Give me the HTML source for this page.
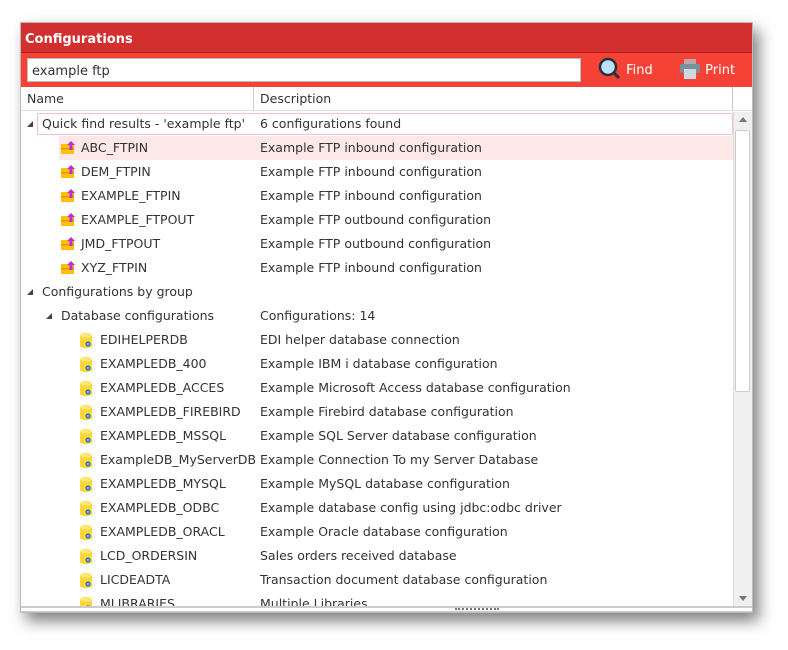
<!DOCTYPE html>
<html><head><style>
*{margin:0;padding:0;box-sizing:border-box}
body{width:788px;height:650px;background:#fff;font-family:"DejaVu Sans","Liberation Sans",sans-serif;font-size:12px;color:#333;position:relative;overflow:hidden}
.win{position:absolute;left:20px;top:22px;width:733px;height:591px;border:1px solid #bbb;background:#fff;box-shadow:6px 8px 14px rgba(0,0,0,.5)}
.title{height:30px;background:#d32f2f;color:#fff;font-weight:bold;font-size:13px;line-height:33px;padding-left:4px;border-bottom:1px solid #b71c1c}
.tool{height:34px;background:#f44336;position:relative}
.search{position:absolute;left:6px;top:5px;width:554px;height:24px;background:#fff;border:1px solid #bbb;line-height:25px;padding-left:4px;font-size:13px;color:#333}
.btn{position:absolute;top:0;line-height:35px;color:#fff;font-size:13px}
.hdr{height:24px;border-bottom:1px solid #ddd;position:relative;line-height:24px;color:#333;font-size:12.5px}
.hdr div{position:absolute;top:0}
.row{position:absolute;height:24px;line-height:24px;left:0;width:712px;white-space:nowrap;font-size:12.5px}
.row span{position:absolute}
.d{left:239px}
.tri{position:absolute;width:0;height:0;border-left:6px solid transparent;border-bottom:6px solid #444;top:9px}
.fi{position:absolute;top:5px;width:15px;height:13px}
.db{position:absolute;top:5px;width:12px;height:15px}
.sb{position:absolute;left:712px;top:89px;width:19px;height:494px;background:#f0f0f0;border-left:1px solid #ddd}
</style></head><body>
<div class="win">
<div class="title">Configurations</div>
<div class="tool">
<div class="search">example ftp</div>
<div class="btn" style="left:577px"><svg width="24" height="24" viewBox="0 0 24 24" style="vertical-align:-7px"><circle cx="10" cy="10" r="8" fill="#bde0fb" stroke="#263238" stroke-width="2.5"/><line x1="16" y1="16" x2="21" y2="21" stroke="#263238" stroke-width="3"/></svg> Find</div>
<div class="btn" style="left:658px"><svg width="22" height="22" viewBox="0 0 22 22" style="vertical-align:-6px"><rect x="5" y="1" width="12" height="6" fill="#bfa6a6"/><rect x="1" y="6" width="20" height="9" rx="2" fill="#78909c"/><rect x="5" y="11" width="12" height="10" fill="#cfd8dc"/></svg> Print</div>
</div>
<div class="hdr"><div style="left:6px">Name</div><div style="left:232px;border-left:1px solid #ccc;padding-left:6px;height:24px">Description</div><div style="left:711px;border-left:1px solid #ccc;height:24px"></div></div>
<div style="position:absolute;left:0;top:89px;width:712px;height:494px;overflow:hidden">
<div class="row" style="top:0"><i class="tri" style="left:6px"></i><div style="position:absolute;left:16px;top:1px;width:696px;height:22px;border:1px solid #f6c4c4"></div><span style="left:21px">Quick find results - 'example ftp'</span><span class="d">6 configurations found</span></div>
<div style="position:absolute;left:38px;top:24px;width:674px;height:24px;background:#fde8e8"></div>
<div id="rows"></div>
</div>
<div class="sb"><div style="position:absolute;left:5px;top:5px;border:4px solid transparent;border-bottom:5px solid #777;border-top:0"></div><div style="position:absolute;left:1px;top:18px;width:15px;height:262px;background:#fff;border:1px solid #ccc;border-radius:2px"></div><div style="position:absolute;left:5px;bottom:5px;border:4px solid transparent;border-top:5px solid #777;border-bottom:0"></div></div>
<div style="position:absolute;left:0;top:583px;width:731px;border-top:2px solid #ccc;height:6px;border-bottom:1px solid #ccc"><div style="position:absolute;left:434px;top:0;width:44px;border-top:2px dotted #777"></div></div>
</div>
<script>
var f=[["ABC_FTPIN","Example FTP inbound configuration"],["DEM_FTPIN","Example FTP inbound configuration"],["EXAMPLE_FTPIN","Example FTP inbound configuration"],["EXAMPLE_FTPOUT","Example FTP outbound configuration"],["JMD_FTPOUT","Example FTP outbound configuration"],["XYZ_FTPIN","Example FTP inbound configuration"]];
var d=[["EDIHELPERDB","EDI helper database connection"],["EXAMPLEDB_400","Example IBM i database configuration"],["EXAMPLEDB_ACCES","Example Microsoft Access database configuration"],["EXAMPLEDB_FIREBIRD","Example Firebird database configuration"],["EXAMPLEDB_MSSQL","Example SQL Server database configuration"],["ExampleDB_MyServerDB","Example Connection To my Server Database"],["EXAMPLEDB_MYSQL","Example MySQL database configuration"],["EXAMPLEDB_ODBC","Example database config using jdbc:odbc driver"],["EXAMPLEDB_ORACL","Example Oracle database configuration"],["LCD_ORDERSIN","Sales orders received database"],["LICDEADTA","Transaction document database configuration"],["MLIBRARIES","Multiple Libraries"]];
var h="",t=24;
var fi='<svg class="fi" style="left:40px" viewBox="0 0 15 13"><rect x="0" y="3" width="13" height="10" fill="#ffc107"/><rect x="0" y="7" width="13" height="1.5" fill="#e69500"/><path d="M10 0L14 4H11.5V9H8.5V4H6Z" fill="#c02bd8"/></svg>';
var db='<svg class="db" style="left:59px" viewBox="0 0 12 15"><path d="M0 2.5A6 2.5 0 0 1 12 2.5V13A6 2 0 0 1 0 13Z" fill="#fdd835"/><ellipse cx="6" cy="2.5" rx="6" ry="2" fill="#ffe57f"/><circle cx="8" cy="11" r="2.6" fill="#1e6fd9"/><circle cx="8" cy="11" r="1" fill="#fdd835"/></svg>';
f.forEach(function(r){h+='<div class="row" style="top:'+t+'px">'+fi+'<span style="left:60px">'+r[0]+'</span><span class="d">'+r[1]+'</span></div>';t+=24;});
h+='<div class="row" style="top:'+t+'px"><i class="tri" style="left:6px"></i><span style="left:21px">Configurations by group</span></div>';t+=24;
h+='<div class="row" style="top:'+t+'px"><i class="tri" style="left:25px"></i><span style="left:40px">Database configurations</span><span class="d">Configurations: 14</span></div>';t+=24;
d.forEach(function(r){h+='<div class="row" style="top:'+t+'px">'+db+'<span style="left:79px">'+r[0]+'</span><span class="d">'+r[1]+'</span></div>';t+=24;});
document.getElementById("rows").outerHTML=h;
</script>
</body></html>
